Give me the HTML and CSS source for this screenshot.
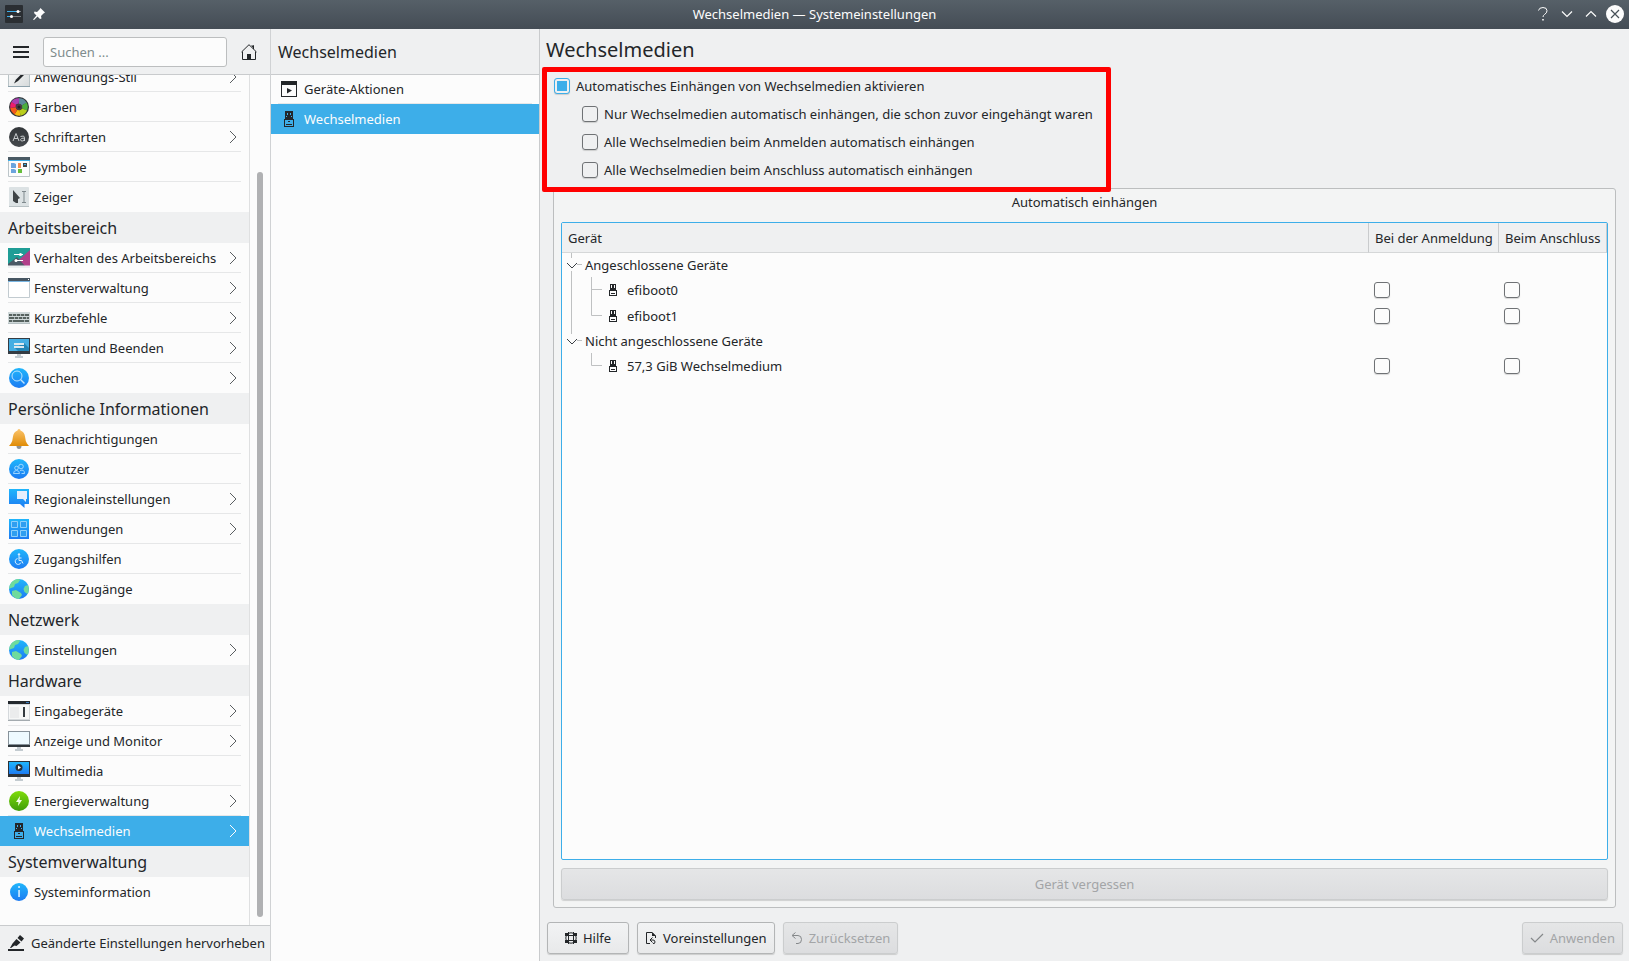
FILE: index.html
```html
<!DOCTYPE html>
<html lang="de">
<head>
<meta charset="utf-8">
<meta name="viewport" content="width=device-width, initial-scale=1">
<title>Wechselmedien — Systemeinstellungen</title>
<link rel="stylesheet" href="styles.css">
</head>
<body>
<svg class="defs" aria-hidden="true">
  <defs>
    <linearGradient id="blue" x1="0" y1="0" x2="0" y2="1"><stop offset="0" stop-color="#1fb6fb"/><stop offset="1" stop-color="#1d7bf2"/></linearGradient>
    <linearGradient id="dark" x1="0" y1="0" x2="0" y2="1"><stop offset="0" stop-color="#33373a"/><stop offset="1" stop-color="#45494d"/></linearGradient>
    <linearGradient id="green" x1="0" y1="0" x2="0" y2="1"><stop offset="0" stop-color="#7fdc0a"/><stop offset="1" stop-color="#3f9c0a"/></linearGradient>
    <linearGradient id="gold" x1="0" y1="0" x2="0" y2="1"><stop offset="0" stop-color="#fbc46c"/><stop offset="1" stop-color="#e08c06"/></linearGradient>
    <linearGradient id="paper" x1="0" y1="0" x2="1" y2="1"><stop offset="0" stop-color="#ffffff"/><stop offset="1" stop-color="#d6dadb"/></linearGradient>
    <symbol id="chevron" viewBox="0 0 8 14"><path d="M1 1l6 6-6 6" fill="none" stroke="currentColor"/></symbol>
    <symbol id="usb" viewBox="0 0 22 22"><path fill="currentColor" fill-rule="evenodd" d="M7 3h8v8h1v8H6v-8h1zM9 5v2h1V5zM12 5v2h1V5zM8 8v1h1V8zM13 8v1h1V8zM7 12v6h8v-6z"/><path fill="currentColor" d="M10 13h2v1h-2zM8 16h6v1H8zM7 11h8v1H7z"/></symbol>
    <symbol id="usb-small" viewBox="0 0 8 12"><path fill="currentColor" fill-rule="evenodd" d="M1 0h6v6h1v6H0V6h1zM2 1v3h1V1zM5 1v3h1V1zM1 7v4h6V7z"/><path fill="currentColor" d="M2 9h4v1H2z"/></symbol>
    <symbol id="globe" viewBox="0 0 22 22"><circle cx="11" cy="11" r="10" fill="url(#blue)"/><path fill="#6fdb9c" d="M3 5q3-4 8-4l1 1-2 3-3 1-1 3-3 1-2 1q0-3 2-6zM17 8l3-1q2 5-.500 9l-3-2-1-3zM4 13l4-1 5 3 1 2-3 4q-4 0-7-4z"/></symbol>
  </defs>
</svg>

<div class="window">
  <header class="titlebar">
    <div class="title-icons">
      <svg width="18" height="18" viewBox="0 0 18 18"><rect width="18" height="18" rx="1" fill="#2a2e32"/><path d="M2 6.500h10" stroke="#3daee9"/><path d="M14 6.500h2M7 11.500h9" stroke="#777d82"/><path d="M2 11.500h4" stroke="#3daee9"/><circle cx="13" cy="6.500" r="1.500" fill="#fff"/><circle cx="6.500" cy="11.500" r="1.500" fill="#fff"/></svg>
      <svg width="12" height="12" viewBox="0 0 12 12"><path fill="#fcfcfc" d="M7.500 0L12 4.500 10.500 5.500 8 8 8.500 10.500 7 11 4.500 8.500 1 12 0 11.500 3.500 7.500 1 5 1.500 3.500 4 4 6.500 1.500z"/></svg>
    </div>
    <h1 class="window-title">Wechselmedien — Systemeinstellungen</h1>
    <div class="window-buttons">
      <button type="button" aria-label="Hilfe"><svg width="10" height="14" viewBox="0 0 10 14"><path d="M.500 3.500Q1 .500 5 .500q4 0 4 3.200Q9 6 6.500 7.500 5 8.500 5 10" fill="none" stroke="#fcfcfc"/><path d="M4.200 12h1.600v1.600H4.200z" fill="#fcfcfc"/></svg></button>
      <button type="button" aria-label="Minimieren"><svg width="12" height="8" viewBox="0 0 12 8"><path d="M1 1.500l5 5 5-5" fill="none" stroke="#fcfcfc" stroke-width="1.200"/></svg></button>
      <button type="button" aria-label="Maximieren"><svg width="12" height="8" viewBox="0 0 12 8"><path d="M1 6.500l5-5 5 5" fill="none" stroke="#fcfcfc" stroke-width="1.200"/></svg></button>
      <button type="button" class="close" aria-label="Schließen"><svg width="18" height="18" viewBox="0 0 18 18"><circle cx="9" cy="9" r="9" fill="#fcfcfc"/><path d="M5 5l8 8M13 5l-8 8" stroke="#475057" stroke-width="1.200"/></svg></button>
    </div>
  </header>

  <div class="panes">
    <aside class="sidebar">
      <div class="toolbar">
        <button type="button" class="icon-button" aria-label="Menü"><svg width="16" height="14" viewBox="0 0 16 14"><path d="M0 2h16M0 7h16M0 12h16" stroke="#232629" stroke-width="2"/></svg></button>
        <input class="search" type="text" placeholder="Suchen ..." aria-label="Suchen">
        <button type="button" class="icon-button" aria-label="Startseite"><svg width="16" height="16" viewBox="0 0 16 16"><path d="M.500 8L8 .700 15.500 8M1.500 7.500v8h13v-8M12.500 5V1.500" fill="none" stroke="#232629"/><path d="M6 10h4v6H6zM10 1.500h3V5z" fill="#232629"/></svg></button>
      </div>
      <div class="nav-wrap">
        <nav class="nav">
          <ul class="nav-list">
            <li><a href="#"><svg class="ico" viewBox="0 0 22 22"><path fill="url(#paper)" stroke="#b9c3c6" d="M.500 1.500h21v19H.500z"/><path fill="#8fa3ad" d="M0 20h22v1H0z"/><path fill="#232629" d="M6 17.500l2-4 7-7 1.500 2-6.500 6.500z"/></svg><span>Anwendungs-Stil</span><svg class="chev"><use href="#chevron"/></svg></a></li>
            <li><a href="#"><svg class="ico" viewBox="0 0 22 22"><circle cx="11" cy="11" r="10" fill="#303438"/><g fill="none" stroke-width="5.500"><path stroke="#ab3fb0" d="M5.500 7.500A6 6 0 0 1 11 5"/><path stroke="#5d8a9a" d="M11 5a6 6 0 0 1 5.200 3"/><path stroke="#4caf3e" d="M16.200 8a6 6 0 0 1 .300 5.500"/><path stroke="#b9ce1c" d="M16.500 13.500A6 6 0 0 1 12 17"/><path stroke="#f6b90c" d="M12 17a6 6 0 0 1-4-1"/><path stroke="#f4591a" d="M8 16a6 6 0 0 1-3-4.500"/><path stroke="#ee1d6b" d="M5 11.500a6 6 0 0 1 .700-4.200"/></g><circle cx="11" cy="11" r="3" fill="#4d3d45"/><circle cx="11" cy="11" r="1.500" fill="#222"/></svg><span>Farben</span></a></li>
            <li><a href="#"><svg class="ico" viewBox="0 0 22 22"><circle cx="11" cy="11" r="10" fill="url(#dark)"/><g fill="none" stroke="#c5c9cb"><path d="M5 15L8 7.500 11 15M6 12.500h4M12.500 10.500q4-1.500 4 1v3.500M16.500 12q-4 0-4 1.700 0 1.300 1.700 1.300 2.300 0 2.300-2"/></g></svg><span>Schriftarten</span><svg class="chev"><use href="#chevron"/></svg></a></li>
            <li><a href="#"><svg class="ico" viewBox="0 0 22 22"><path fill="#fbfcfc" stroke="#bcc5c9" d="M.500 1.500h21v19H.500z"/><path fill="#4a5a64" d="M0 1h22v3H0z"/><path fill="#3daee9" d="M0 4h22v1H0z"/><path fill="#6ba4dd" d="M3 7h3l2 1v4H3zM3 13h3l2 1v3H3z"/><path fill="#f58b4d" d="M10 7h3v5h-3z"/><path fill="#3d464c" d="M15 7h4v4h-4z"/><path fill="#3daee9" d="M16 8h2v1h-2z"/><path fill="#65be3a" d="M10 13h4v4h-4z"/></svg><span>Symbole</span></a></li>
            <li><a href="#"><svg class="ico" viewBox="0 0 22 22"><rect x="1" y="1" width="20" height="20" rx="1" fill="#dce2e4"/><path fill="#b8c1c4" d="M1 20h20v1H1z"/><path fill="#3f4447" d="M5 4l7 8-2 1v4H8l-3-2z"/><path fill="none" stroke="#7f898d" d="M14 5.500h4M16 6v10M14 16.500h4"/></svg><span>Zeiger</span></a></li>
          </ul>
          <h2>Arbeitsbereich</h2>
          <ul class="nav-list">
            <li><a href="#"><svg class="ico" viewBox="0 0 22 22"><path fill="#1f9d96" d="M0 1h22v20H0z"/><path fill="#b1408a" d="M22 3v16H4z"/><path fill="#4b5965" d="M0 17l9-7 8 9H0z"/><path fill="#eceff0" d="M0 18.500h22V21H0z"/><path stroke="#fff" fill="none" d="M6 7.500h9M7 13.500h8"/><circle cx="12.500" cy="7.500" r="1.500" fill="#fff"/><circle cx="8" cy="13.500" r="1.500" fill="#fff"/></svg><span>Verhalten des Arbeitsbereichs</span><svg class="chev"><use href="#chevron"/></svg></a></li>
            <li><a href="#"><svg class="ico" viewBox="0 0 22 22"><path fill="#fff" stroke="#c2cbd0" d="M.500 1.500h21v19H.500z"/><path fill="#475662" d="M0 1h22v3H0z"/><path fill="#7ab6e2" d="M0 4h22v1H0z"/><path fill="#fff" d="M20 2h1v1h-1z"/></svg><span>Fensterverwaltung</span><svg class="chev"><use href="#chevron"/></svg></a></li>
            <li><a href="#"><svg class="ico" viewBox="0 0 22 22"><path fill="#cfd8d9" d="M0 5h22v12H0z"/><path fill="#b5c0c2" d="M0 16h22v1H0z"/><path fill="#56625f" d="M1 7h20v2H1zM1 10h20v2H1zM1 13h20v2H1z"/><path fill="#a9b4b4" d="M4 7h1v2H4zM8 7h1v2H8zM12 7h1v2h-1zM16 7h1v2h-1zM6 10h1v2H6zM10 10h1v2h-1zM14 10h1v2h-1zM18 10h1v2h-1zM4 13h1v2H4zM16 13h1v2h-1z"/></svg><span>Kurzbefehle</span><svg class="chev"><use href="#chevron"/></svg></a></li>
            <li><a href="#"><svg class="ico" viewBox="0 0 22 22"><path fill="#353c43" d="M0 1h22v16H0z"/><path fill="#45aee3" d="M1 2h20v12H1z"/><path fill="#2386b8" d="M7 11l9-5 5 5v3H10z"/><path fill="#dde9ef" d="M6 6h10v2H6zM6 9h10v2H6z"/><path fill="#c3cbd0" d="M9 17h4v2h2v2H7v-2h2z"/></svg><span>Starten und Beenden</span><svg class="chev"><use href="#chevron"/></svg></a></li>
            <li><a href="#"><svg class="ico" viewBox="0 0 22 22"><circle cx="11" cy="11" r="10" fill="url(#blue)"/><circle cx="9" cy="9" r="5" fill="none" stroke="#bde4ff"/><path stroke="#bde4ff" stroke-width="1.500" d="M12.500 12.500l4 4"/></svg><span>Suchen</span><svg class="chev"><use href="#chevron"/></svg></a></li>
          </ul>
          <h2>Persönliche Informationen</h2>
          <ul class="nav-list">
            <li><a href="#"><svg class="ico" viewBox="0 0 22 22"><path fill="#8d9396" d="M8.500 18h5q0 3-2.500 3t-2.500-3z"/><path fill="url(#gold)" d="M11 1q1.500 0 1.500 1.500 4 1.500 4.500 6 .500 5 2 7l2 2.500H1l2-2.500q1.500-2 2-7 .500-4.500 4.500-6Q9.500 1 11 1z"/></svg><span>Benachrichtigungen</span></a></li>
            <li><a href="#"><svg class="ico" viewBox="0 0 22 22"><circle cx="11" cy="11" r="10" fill="url(#blue)"/><g fill="none" stroke="#a9dbff" stroke-width=".900"><circle cx="8.500" cy="10" r="1.800"/><circle cx="13" cy="8.500" r="2.300"/><path d="M5.500 15.500q0-3 3-3t3 3zM12 12.500q4.500-1.500 4.500 3h-3"/></g></svg><span>Benutzer</span></a></li>
            <li><a href="#"><svg class="ico" viewBox="0 0 22 22"><path fill="url(#blue)" d="M1 1h20v15h-4.500v4L12 16H1z"/><path fill="#e5eefc" d="M9 3h10v8h-1v3l-3-3H9z"/></svg><span>Regionaleinstellungen</span><svg class="chev"><use href="#chevron"/></svg></a></li>
            <li><a href="#"><svg class="ico" viewBox="0 0 22 22"><path fill="url(#blue)" d="M1 1h20v20H1z"/><path fill="#2f9ef0" stroke="#8fd0fb" d="M3.500 3.500h6v6h-6zM12.500 3.500h6v6h-6zM3.500 12.500h6v6h-6zM12.500 12.500h6v6h-6z"/></svg><span>Anwendungen</span><svg class="chev"><use href="#chevron"/></svg></a></li>
            <li><a href="#"><svg class="ico" viewBox="0 0 22 22"><circle cx="11" cy="11" r="10" fill="url(#blue)"/><circle cx="11" cy="6.500" r="1.200" fill="#d5edff"/><path fill="none" stroke="#d5edff" d="M11 8v4.500h2.500l1.500 3M11 10h2.500M9.500 10.500a3 3 0 1 0 3.500 4"/></svg><span>Zugangshilfen</span></a></li>
            <li><a href="#"><svg class="ico"><use href="#globe"/></svg><span>Online-Zugänge</span></a></li>
          </ul>
          <h2>Netzwerk</h2>
          <ul class="nav-list">
            <li><a href="#"><svg class="ico"><use href="#globe"/></svg><span>Einstellungen</span><svg class="chev"><use href="#chevron"/></svg></a></li>
          </ul>
          <h2>Hardware</h2>
          <ul class="nav-list">
            <li><a href="#"><svg class="ico" viewBox="0 0 22 22"><path fill="#d5d9dc" d="M0 1h22v20H0z"/><path fill="#23282d" d="M0 1h22v3H0z"/><path fill="#3b7fc0" d="M18 2h3v1h-3z"/><path fill="#f6f7f7" d="M1 5h20v14H1z"/><path fill="#ebeced" d="M2 7h9v11H2z"/><path fill="#343a3f" d="M15 7h2v10h-2z"/><path fill="#a4abaf" d="M0 20h22v1H0z"/></svg><span>Eingabegeräte</span><svg class="chev"><use href="#chevron"/></svg></a></li>
            <li><a href="#"><svg class="ico" viewBox="0 0 22 22"><path fill="#87929a" d="M0 1h22v15H0z"/><path fill="#eefaff" d="M1 2h20v12H1z"/><path fill="#2f363b" d="M0 15h22v2H0z"/><path fill="#c3cbd0" d="M9 17h4v2h2v2H7v-2h2z"/></svg><span>Anzeige und Monitor</span><svg class="chev"><use href="#chevron"/></svg></a></li>
            <li><a href="#"><svg class="ico" viewBox="0 0 22 22"><path fill="#2c3237" d="M0 1h22v16H0z"/><path fill="url(#blue)" d="M1 2h20v12H1z"/><circle cx="11" cy="7.500" r="3.500" fill="#2b3035"/><path fill="#fff" d="M10 5.500l3 2-3 2z"/><path fill="#c3cbd0" d="M9 17h4v2h2v2H7v-2h2z"/></svg><span>Multimedia</span></a></li>
            <li><a href="#"><svg class="ico" viewBox="0 0 22 22"><circle cx="11" cy="11" r="10" fill="url(#green)"/><path fill="#f3ffe8" d="M12 6l-4 6h2.500l-.500 4 4-6h-2.500z"/></svg><span>Energieverwaltung</span><svg class="chev"><use href="#chevron"/></svg></a></li>
            <li class="selected"><a href="#" aria-current="page"><svg class="ico dark"><use href="#usb"/></svg><span>Wechselmedien</span><svg class="chev"><use href="#chevron"/></svg></a></li>
          </ul>
          <h2>Systemverwaltung</h2>
          <ul class="nav-list">
            <li><a href="#"><svg class="ico" viewBox="0 0 22 22"><circle cx="11" cy="11" r="9" fill="url(#blue)"/><path fill="#e3f3ff" d="M10.300 5h1.500v2h-1.500zM10.300 9h1.500v7h-1.500z"/></svg><span>Systeminformation</span></a></li>
          </ul>
        </nav>
        <div class="scroll-track"><div class="scroll-thumb"></div></div>
      </div>
      <button type="button" class="highlight-button"><svg width="16" height="16" viewBox="0 0 16 16"><path fill="#232629" d="M0 14h16v2H0zM12 0l4 3.500-2.500 3L9.500 3zM8.500 4l4 3.500-4 3.500-2-.500L3 13H2l2.500-4.500z"/></svg><span>Geänderte Einstellungen hervorheben</span></button>
    </aside>

    <section class="submenu">
      <h2 class="submenu-title">Wechselmedien</h2>
      <ul class="nav-list">
        <li><a href="#"><svg class="ico" viewBox="0 0 22 22"><path fill="#232629" fill-rule="evenodd" d="M3 3h16v16H3zM4 7v11h14V7z"/><path fill="#232629" d="M9 10l5 2.500-5 3z"/></svg><span>Geräte-Aktionen</span></a></li>
        <li class="selected"><a href="#" aria-current="page"><svg class="ico dark"><use href="#usb"/></svg><span>Wechselmedien</span></a></li>
      </ul>
    </section>

    <main class="content">
      <h2 class="page-title">Wechselmedien</h2>
      <div class="options">
        <label><input type="checkbox" class="partial" checked aria-checked="mixed">Automatisches Einhängen von Wechselmedien aktivieren</label>
        <label class="child"><input type="checkbox">Nur Wechselmedien automatisch einhängen, die schon zuvor eingehängt waren</label>
        <label class="child"><input type="checkbox">Alle Wechselmedien beim Anmelden automatisch einhängen</label>
        <label class="child"><input type="checkbox">Alle Wechselmedien beim Anschluss automatisch einhängen</label>
      </div>

      <section class="group" aria-labelledby="group-title">
        <h3 id="group-title">Automatisch einhängen</h3>
        <div class="tree">
          <table>
            <colgroup><col><col class="col-login"><col class="col-attach"></colgroup>
            <thead><tr><th scope="col">Gerät</th><th scope="col">Bei der Anmeldung</th><th scope="col">Beim Anschluss</th></tr></thead>
            <tbody>
              <tr class="parent"><td colspan="3"><div class="cell"><svg width="23" height="24" viewBox="0 0 23 24"><path d="M9.500 0v5M9.500 18v6M15 11.500h5" stroke="#bfc1c2"/><path d="M5 10l5 5 5-5" fill="none" stroke="#3b4045"/></svg>Angeschlossene Geräte</div></td></tr>
              <tr><td><div class="cell"><svg width="47" height="26" viewBox="0 0 47 26"><path d="M9.500 0v26M29.500 0v26M30 12.500h10" fill="none" stroke="#bfc1c2"/></svg><svg class="device" width="8" height="12"><use href="#usb-small"/></svg>efiboot0</div></td><td><input type="checkbox" aria-label="efiboot0 bei der Anmeldung"></td><td><input type="checkbox" aria-label="efiboot0 beim Anschluss"></td></tr>
              <tr><td><div class="cell"><svg width="47" height="26" viewBox="0 0 47 26"><path d="M9.500 0v26M29.500 0v12.500H40" fill="none" stroke="#bfc1c2"/></svg><svg class="device" width="8" height="12"><use href="#usb-small"/></svg>efiboot1</div></td><td><input type="checkbox" aria-label="efiboot1 bei der Anmeldung"></td><td><input type="checkbox" aria-label="efiboot1 beim Anschluss"></td></tr>
              <tr class="parent"><td colspan="3"><div class="cell"><svg width="23" height="24" viewBox="0 0 23 24"><path d="M9.500 0v5M15 11.500h5" stroke="#bfc1c2"/><path d="M5 10l5 5 5-5" fill="none" stroke="#3b4045"/></svg>Nicht angeschlossene Geräte</div></td></tr>
              <tr><td><div class="cell"><svg width="47" height="26" viewBox="0 0 47 26"><path d="M29.500 0v12.500H40" fill="none" stroke="#bfc1c2"/></svg><svg class="device" width="8" height="12"><use href="#usb-small"/></svg>57,3 GiB Wechselmedium</div></td><td><input type="checkbox" aria-label="Wechselmedium bei der Anmeldung"></td><td><input type="checkbox" aria-label="Wechselmedium beim Anschluss"></td></tr>
            </tbody>
          </table>
        </div>
        <button type="button" class="btn forget" disabled>Gerät vergessen</button>
      </section>

      <footer class="actions">
        <button type="button" class="btn help"><svg width="12" height="12" viewBox="0 0 12 12"><g fill="none" stroke="#232629"><circle cx="6" cy="6" r="5.200"/><path d="M3.500 0v12M8.500 0v12M0 3.500h12M0 8.500h12"/></g><path d="M0 1h3v2H0zM9 1h3v2H9zM0 9h3v2H0zM9 9h3v2H9z" fill="#232629"/></svg>Hilfe</button>
        <button type="button" class="btn"><svg width="12" height="12" viewBox="0 0 12 12"><path d="M5 11.500H1.500V.500H7L10.500 4v2" fill="none" stroke="#232629"/><path d="M7 0v4h4z" fill="#232629"/><path d="M7.500 5.500L5 8l2.500 2.500M5.500 8H8q2 0 2 2t-2 1.500" fill="none" stroke="#232629"/></svg>Voreinstellungen</button>
        <button type="button" class="btn" disabled><svg width="12" height="12" viewBox="0 0 12 12"><path d="M4.500 .500L1 3.500l3.500 3M1.500 3.500H7q3.500 0 3.500 4T7 11.500H5" fill="none" stroke="#85888a"/></svg>Zurücksetzen</button>
        <button type="button" class="btn apply" disabled><svg width="14" height="12" viewBox="0 0 14 12"><path d="M1 6l4 4 8-8" fill="none" stroke="#85888a" stroke-width="1.200"/></svg>Anwenden</button>
      </footer>
    </main>
  </div>
</div>
</body>
</html>
```
FILE: styles.css
```css
* { box-sizing: border-box; }
body {
  margin: 0;
  font: 13px/20px "Noto Sans", sans-serif;
  color: #232629;
  background: #eff0f1;
}
h1, h2, h3, ul { margin: 0; padding: 0; font-weight: 400; }
ul { list-style: none; }
svg { flex: none; display: block; }
button, input { font: inherit; color: inherit; margin: 0; }
.defs { position: absolute; width: 0; height: 0; }

.window { display: flex; flex-direction: column; height: 100vh; min-height: 640px; }

.titlebar {
  display: grid;
  grid-template-columns: 1fr auto 1fr;
  align-items: center;
  height: 29px;
  padding: 0 5px 1px;
  color: #fcfcfc;
  background: linear-gradient(#566068, #444c55);
}
.title-icons { display: flex; align-items: center; gap: 10px; }
.window-title { font-size: 13px; line-height: 20px; }
.window-buttons { display: flex; justify-content: flex-end; align-items: center; }
.window-buttons button {
  display: flex;
  justify-content: center;
  width: 24px;
  padding: 0;
  border: 0;
  background: none;
}
.window-buttons .close { width: 18px; margin-left: 3px; }

.panes { display: grid; grid-template-columns: 271px 269px minmax(0, 1fr); flex: 1; min-height: 0; }

.sidebar { display: flex; flex-direction: column; min-height: 0; border-right: 1px solid #d0d2d4; }
.toolbar {
  display: flex;
  align-items: center;
  gap: 14px;
  height: 46px;
  padding: 0 13px;
  border-bottom: 1px solid #c9cbcd;
}
.icon-button { display: flex; padding: 0; border: 0; background: none; }
.search {
  flex: 1;
  min-width: 0;
  height: 30px;
  padding: 0 6px;
  border: 1px solid #bcbebf;
  border-radius: 3px;
  background: #fcfcfc;
}
.search::placeholder { color: #7f8c8d; opacity: 1; }

.nav-wrap { display: flex; flex: 1; min-height: 0; background: #fcfcfc; }
.nav {
  display: flex;
  flex-direction: column;
  justify-content: flex-end;
  flex: 1;
  min-width: 0;
  padding-bottom: 18px;
  overflow: hidden;
}
.nav h2 {
  flex: none;
  height: 31px;
  padding: 1px 8px 0;
  font-size: 16px;
  line-height: 30px;
  background: #eff0f1;
}
.nav-list li { padding: 0 8px; }
.nav-list a {
  display: flex;
  align-items: center;
  gap: 4px;
  height: 30px;
  padding: 1px 4px 0 0;
  border-bottom: 1px solid #e6e7e8;
  color: inherit;
  text-decoration: none;
  white-space: nowrap;
}
.nav-list li:last-child a { border-bottom-color: transparent; }
.nav-list .selected { color: #fcfcfc; background: #3daee9; }
.ico { width: 22px; height: 22px; }
.dark { color: #232629; }
.chev { width: 8px; height: 14px; margin-left: auto; color: #5a5e61; }
.selected .chev { color: #fcfcfc; }

.scroll-track {
  display: flex;
  flex: none;
  width: 21px;
  padding: 97px 7px 8px;
  border-left: 1px solid #dfe0e1;
}
.scroll-thumb { width: 6px; border-radius: 3px; background: #b0b1b3; }

.highlight-button {
  display: flex;
  align-items: center;
  gap: 7px;
  height: 36px;
  padding: 0 4px 1px 8px;
  border: 0;
  border-top: 1px solid #c9cbcd;
  background: none;
  white-space: nowrap;
}

.submenu { border-right: 1px solid #c9cbcd; background: #fcfcfc; }
.submenu-title {
  height: 46px;
  padding: 0 7px;
  border-bottom: 1px solid #c9cbcd;
  font-size: 16px;
  line-height: 46px;
  background: #eff0f1;
}
.submenu .nav-list li { padding: 0 7px; }
.submenu .nav-list li:first-child a { height: 29px; padding-top: 0; }

.content { display: flex; flex-direction: column; min-height: 0; }
.page-title { padding: 7px 6px 3px; font-size: 20px; line-height: 28px; }

.options {
  position: relative;
  z-index: 1;
  align-self: flex-start;
  margin-left: 2px;
  padding: 0 13px 3px 7px;
  border: 5px solid #ff0000;
  border-radius: 2px;
}
.options label { display: flex; align-items: center; gap: 6px; height: 28px; }
.options .child { padding-left: 28px; }

input[type="checkbox"] {
  appearance: none;
  display: block;
  flex: none;
  width: 16px;
  height: 16px;
  border: 1px solid #6f7275;
  border-radius: 3px;
  box-shadow: 0 1px 1px rgba(0, 0, 0, 0.15);
}
input[type="checkbox"].partial {
  padding: 2px;
  border-color: #3daee9;
  background: #3daee9 content-box;
}

.group {
  display: flex;
  flex: 1;
  flex-direction: column;
  min-height: 0;
  margin: -4px 13px 0;
  padding: 0 7px 6px;
  border: 1px solid #bcbebf;
  border-radius: 3px;
  background: #f3f4f4;
}
.group h3 { padding-bottom: 7px; font-size: 13px; line-height: 26px; text-align: center; }

.tree {
  flex: 1;
  min-height: 0;
  overflow: hidden;
  border: 1px solid #3daee9;
  border-radius: 2px;
  background: #fcfcfc;
}
.tree table { width: 100%; table-layout: fixed; border-collapse: separate; border-spacing: 0; }
.col-login { width: 130px; }
.col-attach { width: 108px; }
.tree th {
  height: 30px;
  padding: 0 6px;
  border-right: 1px solid #c9cbcd;
  border-bottom: 1px solid #d5d7d8;
  font-weight: 400;
  text-align: left;
  white-space: nowrap;
  background: #eff0f1;
}
.tree td { height: 26px; padding: 0 0 0 5px; }
.tree td:first-child { padding-left: 0; }
.tree .parent td { height: 24px; }
.cell { display: flex; align-items: center; }
.device { margin-right: 10px; }

.btn {
  display: flex;
  align-items: center;
  justify-content: center;
  gap: 6px;
  height: 32px;
  padding: 0 7px;
  border: 1px solid #b3b5b6;
  border-radius: 3px;
  background: linear-gradient(#f2f3f4, #e8e9ea);
  box-shadow: 0 1px 1px rgba(0, 0, 0, 0.15);
  white-space: nowrap;
}
.btn:disabled {
  color: #a3a5a7;
  border-color: #cbcdce;
  background: linear-gradient(#e5e6e7, #dcdddf);
}
.forget { flex: none; margin-top: 8px; }

.group { padding-bottom: 7px; }
.actions { display: flex; gap: 8px; padding: 14px 6px 7px 7px; }
.help { width: 82px; }
.apply { margin-left: auto; }
```
